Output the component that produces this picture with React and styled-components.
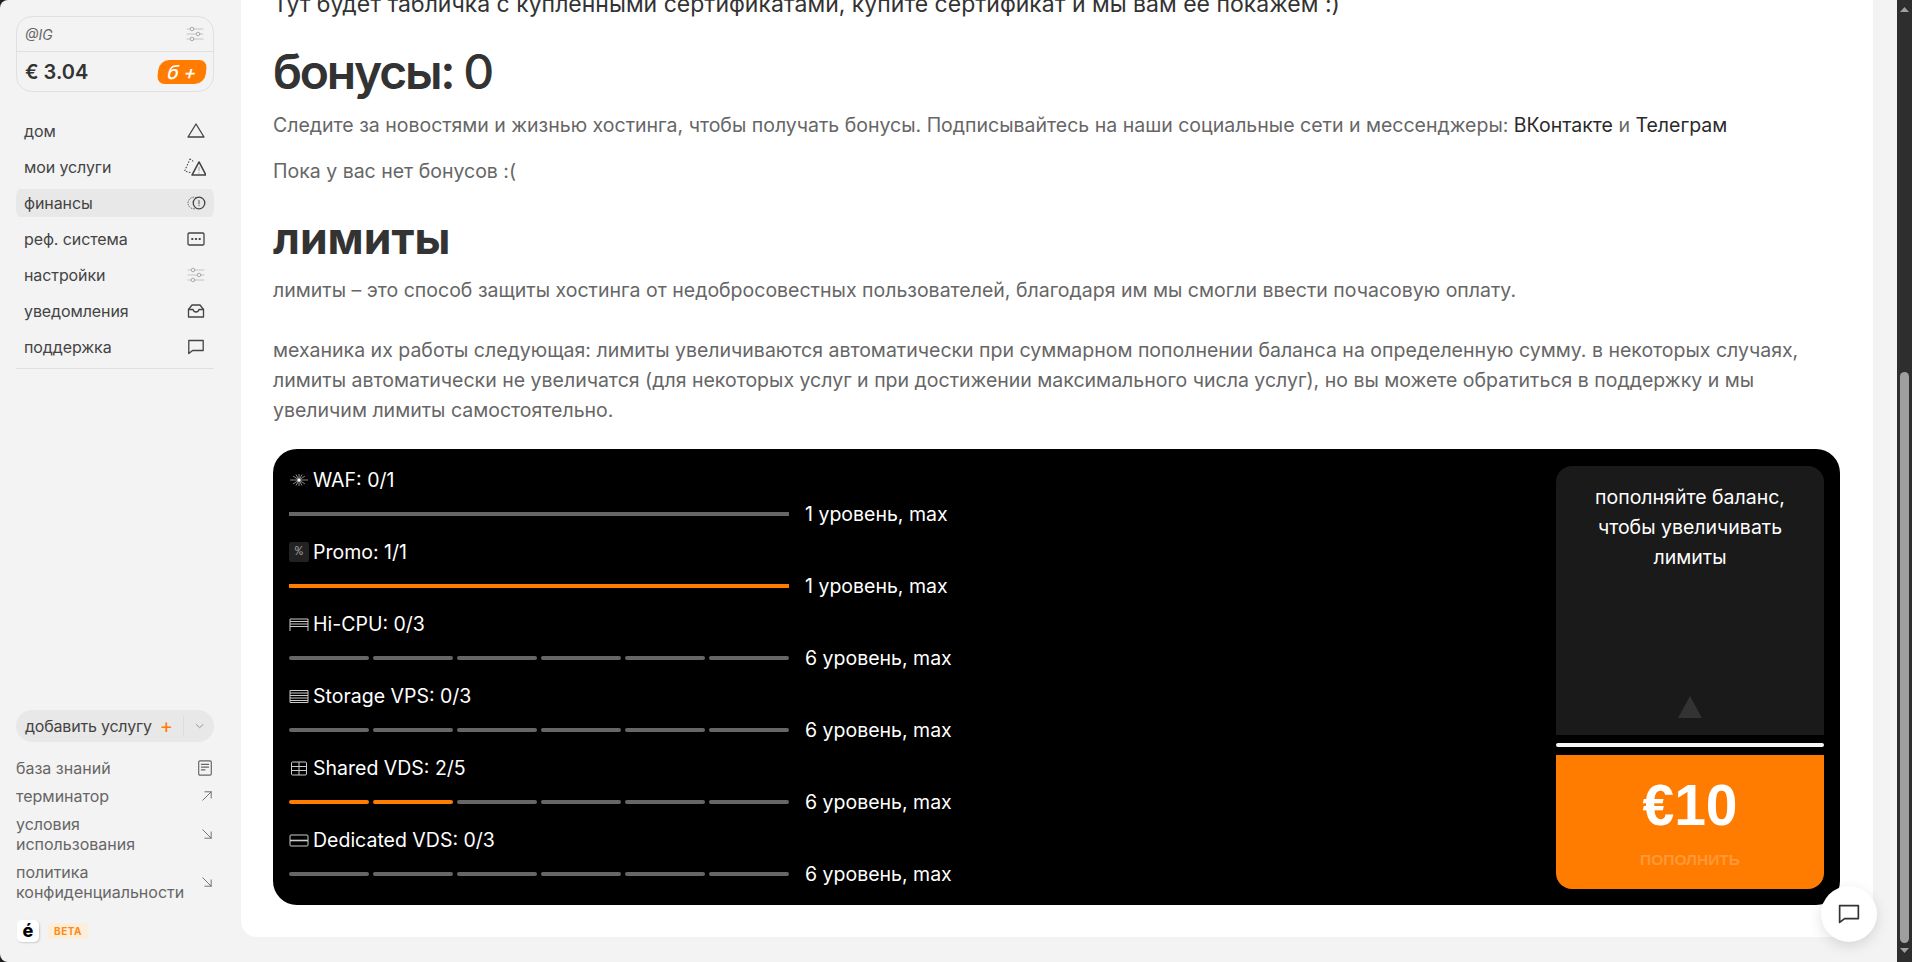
import React from 'react';
import { styled, createGlobalStyle } from 'styled-components';

const GlobalStyle = createGlobalStyle`
html, body { margin: 0; padding: 0; background: #1f1f1f; }
body { font-family: Inter, "Liberation Sans", sans-serif; overflow: hidden; }
* { box-sizing: border-box; }
`;

const Stroke = ({ children, size = 20, color = '#444', width = 1.3 }) => (
  <svg width={size} height={size} viewBox="0 0 20 20" fill="none" stroke={color} strokeWidth={width} strokeLinecap="round" strokeLinejoin="round">
    {children}
  </svg>
);

const TriangleIcon = () => <Stroke><path d="M10 3 18 16H2Z" /></Stroke>;
const ServicesIcon = () => (
  <Stroke size={24}>
    <path d="M6.7 3.3 2.2 13.3 8 15M6.7 3.3 9 5" strokeDasharray="0.6 1.9" strokeWidth="0.9" />
    <path d="M14.2 5.8 20 16.7H8.3Z" />
    <path d="M14.2 10v3M14.2 14.8v.2" strokeWidth="0.8" stroke="#999" />
  </Stroke>
);
const FinanceIcon = () => (
  <Stroke size={20}>
    <path d="M10 4.6A5.8 5.8 0 1 0 10 15.4" strokeDasharray="0.6 1.9" strokeWidth="0.9" />
    <circle cx="13" cy="10" r="5.8" />
    <path d="M13 7.5v3.5M13 12.6v.2" strokeWidth="0.9" />
  </Stroke>
);
const RefIcon = () => (
  <Stroke>
    <rect x="2" y="4" width="16" height="12" rx="1.2" />
    <path d="M6 10h.6M9.7 10h.6M13.4 10h.6" strokeWidth="1.8" />
  </Stroke>
);
const SlidersIcon = () => (
  <Stroke color="#aaa" width={1}>
    <path d="M2 5h16M2 10h16M2 15h16" stroke="#c4c4c4" />
    <circle cx="7" cy="5" r="1.8" fill="#f3f3f3" />
    <circle cx="13" cy="10" r="1.8" fill="#f3f3f3" />
    <circle cx="7" cy="15" r="1.8" fill="#f3f3f3" />
  </Stroke>
);
const InboxIcon = () => (
  <Stroke>
    <path d="M2.5 8.5 6 4h8l3.5 4.5V16h-15Z" />
    <path d="M2.5 8.5H7c.5 1.8 1.6 2.5 3 2.5s2.5-.7 3-2.5h4.5" />
  </Stroke>
);
const ChatIcon = ({ size = 20, color = '#444' }) => (
  <Stroke size={size} color={color}>
    <path d="M2.8 3.5h14.4v10H6.6l-3.8 3Z" />
  </Stroke>
);
const BookIcon = () => (
  <Stroke size={18} color="#666">
    <rect x="3" y="2" width="14" height="16" rx="1.5" />
    <path d="M6 6h8M6 9h8M6 12h4" />
  </Stroke>
);
const ArrowUpIcon = () => (
  <Stroke size={14} color="#666">
    <path d="M4 16 16 4M7 4h9v9" />
  </Stroke>
);
const ArrowDownIcon = () => (
  <Stroke size={14} color="#666">
    <path d="M4 4 16 16M16 7v9H7" />
  </Stroke>
);
const Chevron = () => (
  <Stroke size={14} color="#777">
    <path d="M4 7.5 10 13l6-5.5" />
  </Stroke>
);

const LimitStroke = ({ children }) => (
  <svg width="20" height="20" viewBox="0 0 20 20" fill="none" stroke="#ccc" strokeWidth="1">
    {children}
  </svg>
);
const WafIcon = () => (
  <LimitStroke>
    <path d="M1 10h18M10 4v12M4 6l12 8M16 6 4 14M7 4.5l6 11M13 4.5l-6 11" strokeWidth="0.8" stroke="#aaa" />
    <circle cx="10" cy="10" r="1.6" fill="#fff" stroke="none" />
  </LimitStroke>
);
const HiCpuIcon = () => (
  <LimitStroke>
    <path d="M1 17V5h18v12M1 7.5h18M1 10h18M1 12.5h18" />
  </LimitStroke>
);
const StorageIcon = () => (
  <LimitStroke>
    <path d="M1 16.5V4.5h18v12ZM1 7h18M1 9.5h18M1 12h18M1 14.5h18" />
  </LimitStroke>
);
const SharedIcon = () => (
  <LimitStroke>
    <rect x="2.5" y="4" width="15" height="13" rx="1" />
    <path d="M2.5 8.5h15M2.5 12.5h15M10 4v13" />
  </LimitStroke>
);
const DedicatedIcon = () => (
  <LimitStroke>
    <rect x="1" y="5" width="18" height="11" rx="1" />
    <path d="M1 10.5h18" strokeWidth="1.6" />
  </LimitStroke>
);

export default function App() {
  const nav = [
    ['дом', <TriangleIcon />],
    ['мои услуги', <ServicesIcon />],
    ['финансы', <FinanceIcon />, true],
    ['реф. система', <RefIcon />],
    ['настройки', <SlidersIcon />],
    ['уведомления', <InboxIcon />],
    ['поддержка', <ChatIcon />],
  ];

  const limits = [
    { icon: <WafIcon />, name: 'WAF: 0/1', parts: 1, filled: 0, level: '1 уровень, max' },
    { icon: <PercentBox>%</PercentBox>, name: 'Promo: 1/1', parts: 1, filled: 1, level: '1 уровень, max' },
    { icon: <HiCpuIcon />, name: 'Hi-CPU: 0/3', parts: 6, filled: 0, level: '6 уровень, max' },
    { icon: <StorageIcon />, name: 'Storage VPS: 0/3', parts: 6, filled: 0, level: '6 уровень, max' },
    { icon: <SharedIcon />, name: 'Shared VDS: 2/5', parts: 6, filled: 2, level: '6 уровень, max' },
    { icon: <DedicatedIcon />, name: 'Dedicated VDS: 0/3', parts: 6, filled: 0, level: '6 уровень, max' },
  ];

  return (
    <Page>
      <GlobalStyle />
      <Sidebar>
        <Account>
          <AccountTop>
            <span>@IG</span>
            <SlidersIcon />
          </AccountTop>
          <AccountBottom>
            <strong>€ 3.04</strong>
            <TopUp>б +</TopUp>
          </AccountBottom>
        </Account>
        <Nav>
          {nav.map(([label, icon, active]) => (
            <NavItem key={label} $active={active}>
              <span>{label}</span>
              <IconSlot>{icon}</IconSlot>
            </NavItem>
          ))}
        </Nav>
        <Bottom>
          <AddService>
            <span>добавить услугу</span>
            <Plus>+</Plus>
            <Sep />
            <Chevron />
          </AddService>
          <Links>
            <LinkRow><span>база знаний</span><BookIcon /></LinkRow>
            <LinkRow><span>терминатор</span><ArrowUpIcon /></LinkRow>
            <LinkRow><span>условия<br />использования</span><ArrowDownIcon /></LinkRow>
            <LinkRow><span>политика<br />конфиденциальности</span><ArrowDownIcon /></LinkRow>
          </Links>
          <Brand>
            <Logo>é</Logo>
            <Beta>BETA</Beta>
          </Brand>
        </Bottom>
      </Sidebar>
      <MainScroll>
        <Panel>
          <Lead>Тут будет табличка с купленными сертификатами, купите сертификат и мы вам ее покажем :)</Lead>
          <H1>бонусы: <Count>0</Count></H1>
          <Text>
            Следите за новостями и жизнью хостинга, чтобы получать бонусы. Подписывайтесь на наши социальные сети и мессенджеры: <A>ВКонтакте</A> и <A>Телеграм</A>
          </Text>
          <Text>Пока у вас нет бонусов :(</Text>
          <H2>лимиты</H2>
          <LimitsText>
            лимиты – это способ защиты хостинга от недобросовестных пользователей, благодаря им мы смогли ввести почасовую оплату.
            <br /><br />
            механика их работы следующая: лимиты увеличиваются автоматически при суммарном пополнении баланса на определенную сумму. в некоторых случаях, лимиты автоматически не увеличатся (для некоторых услуг и при достижении максимального числа услуг), но вы можете обратиться в поддержку и мы увеличим лимиты самостоятельно.
          </LimitsText>
          <LimitsCard>
            <LimitList>
              {limits.map((l) => (
                <Limit key={l.name}>
                  <LimitName>{l.icon}<span>{l.name}</span></LimitName>
                  <LimitLine>
                    <Bar>
                      {Array.from({ length: l.parts }).map((_, i) => (
                        <Segment key={i} $on={i < l.filled} $solid={l.parts === 1} />
                      ))}
                    </Bar>
                    <span>{l.level}</span>
                  </LimitLine>
                </Limit>
              ))}
            </LimitList>
            <Side>
              <Hint>
                <span>пополняйте баланс, чтобы увеличивать лимиты</span>
                <HintArrow />
              </Hint>
              <WhiteLine />
              <Offer>
                <Amount>€10</Amount>
                <OfferLabel>пополнить</OfferLabel>
              </Offer>
            </Side>
          </LimitsCard>
        </Panel>
        <ChatButton><ChatIcon size={26} color="#333" /></ChatButton>
      </MainScroll>
      <ScrollBar>
        <ScrollArrow $up />
        <Thumb />
        <ScrollArrow />
      </ScrollBar>
    </Page>
  );
}

const Page = styled.div`
display: flex;
height: 962px;
width: 1912px;
overflow: hidden;
background: #1f1f1f;
`;

const Sidebar = styled.aside`
width: 241px;
flex-shrink: 0;
background: #f3f3f3;
border-radius: 8px 0 0 8px;
padding: 16px 27px 20px 16px;
display: flex;
flex-direction: column;
color: #444;
`;

const Account = styled.div`
border: 1px solid #e0e0e0;
border-radius: 16px;
height: 76px;
`;

const AccountTop = styled.div`
height: 35px;
padding: 0 8px 0 8px;
display: flex;
align-items: center;
justify-content: space-between;
border-bottom: 1px solid #e0e0e0;
font-size: 14px;
font-style: italic;
color: #666;
`;

const AccountBottom = styled.div`
height: 39px;
padding: 0 7px 0 8px;
display: flex;
align-items: center;
justify-content: space-between;
strong { font-size: 20px; font-weight: 600; color: #333; }
`;

const TopUp = styled.span`
width: 48px;
height: 24px;
border-radius: 10px 8px 10px 8px;
transform: skewX(-6deg);
background: #ff7c00;
color: #fff;
font-size: 19px;
font-style: italic;
font-weight: 500;
display: flex;
align-items: center;
justify-content: center;
`;

const Nav = styled.nav`
margin-top: 21px;
padding-bottom: 3px;
border-bottom: 1px solid #e0e0e0;
display: flex;
flex-direction: column;
`;

const NavItem = styled.div`
height: 36px;
padding: 4px 8px;
display: flex;
align-items: center;
justify-content: space-between;
font-size: 16px;
letter-spacing: -0.1px;
color: #444;
background: ${({ $active }) => ($active ? 'linear-gradient(#e8e8e8, #e8e8e8) center / 100% 28px no-repeat' : 'none')};
border-radius: 12px;
`;

const IconSlot = styled.span`
width: 20px;
height: 24px;
display: flex;
align-items: center;
justify-content: flex-end;
svg:only-child { flex-shrink: 0; }
`;

const Bottom = styled.div`
margin-top: auto;
`;

const AddService = styled.div`
height: 32px;
border-radius: 16px;
background: #e8e8e8;
padding: 0 9px;
display: flex;
align-items: center;
font-size: 16px;
letter-spacing: -0.2px;
white-space: nowrap;
color: #444;
`;

const Plus = styled.span`
color: #ff7c00;
font-size: 20px;
margin-left: 8px;
`;

const Sep = styled.span`
width: 1px;
height: 20px;
background: #ddd;
margin: 0 10px;
flex-shrink: 0;
`;

const Links = styled.div`
margin-top: 16px;
display: flex;
flex-direction: column;
gap: 8px;
`;

const LinkRow = styled.div`
display: flex;
align-items: center;
justify-content: space-between;
font-size: 16px;
line-height: 20px;
color: #666;
svg { flex-shrink: 0; }
`;

const Brand = styled.div`
margin-top: 18px;
display: flex;
align-items: center;
gap: 9px;
padding-left: 1px;
`;

const Logo = styled.div`
width: 22px;
height: 22px;
border-radius: 5px;
background: #fff;
box-shadow: 1px 1px 2px #ccc;
color: #000;
font-weight: 800;
font-size: 18px;
line-height: 22px;
text-align: center;
`;

const Beta = styled.div`
width: 40px;
height: 16px;
border-radius: 3px;
background: #fbeeda;
color: #ff8a14;
font-size: 10px;
font-weight: 700;
letter-spacing: 0.5px;
line-height: 16px;
text-align: center;
`;

const MainScroll = styled.main`
flex: 1;
position: relative;
background: #f3f3f3;
padding-bottom: 25px;
padding-right: 24px;
display: flex;
flex-direction: column;
justify-content: flex-end;
overflow: hidden;
`;

const Panel = styled.div`
background: #fff;
border-radius: 0 0 16px 16px;
padding: 0 33px 32px 32px;
`;

const Lead = styled.p`
margin: 0 0 24px;
font-size: 23px;
line-height: 30px;
color: #333;
`;

const H1 = styled.h1`
margin: 0 0 9px;
font-size: 48px;
line-height: 58px;
font-weight: 600;
letter-spacing: -2.2px;
color: #333;
`;

const Count = styled.span`
font-weight: 500;
`;

const Text = styled.p`
margin: 0 0 16px;
font-size: 19.5px;
line-height: 30px;
color: #666;
`;

const LimitsText = styled(Text)`
margin-bottom: 24px;
`;

const A = styled.a`
color: #2a2a2a;
`;

const H2 = styled.h2`
margin: 25px 0 10px;
font-size: 44.5px;
line-height: 54px;
font-weight: 700;
color: #333;
`;

const LimitsCard = styled.div`
background: #000;
border-radius: 24px;
height: 456px;
padding: 18px 16px 16px;
display: flex;
justify-content: space-between;
color: #fff;
`;

const LimitList = styled.div`
display: flex;
flex-direction: column;
gap: 13px;
`;

const Limit = styled.div`
height: 59px;
`;

const LimitName = styled.div`
height: 26px;
display: flex;
align-items: center;
gap: 4px;
font-size: 19.5px;
`;

const PercentBox = styled.span`
width: 20px;
height: 20px;
border-radius: 2px;
background: #222;
color: #999;
font-family: "Liberation Mono", monospace;
font-size: 13px;
line-height: 20px;
text-align: center;
`;

const LimitLine = styled.div`
display: flex;
align-items: center;
gap: 16px;
margin-top: 9px;
font-size: 19.5px;
line-height: 24px;
`;

const Bar = styled.div`
width: 500px;
display: flex;
gap: 4px;
`;

const Segment = styled.div`
flex: 1;
height: 4px;
border-radius: ${({ $solid }) => ($solid ? '0' : '2px')};
background: ${({ $on }) => ($on ? '#ff7c00' : '#666')};
`;

const Side = styled.div`
width: 268px;
margin-top: -1px;
display: flex;
flex-direction: column;
`;

const Hint = styled.div`
height: 269px;
background: #1a1a1a;
border-radius: 16px 16px 0 0;
padding: 16px 24px 17px;
display: flex;
flex-direction: column;
justify-content: space-between;
align-items: center;
text-align: center;
font-size: 19.5px;
line-height: 30px;
`;

const HintArrow = styled.div`
width: 24px;
height: 22px;
background: #333;
clip-path: polygon(50% 0, 100% 100%, 0 100%);
`;

const WhiteLine = styled.div`
height: 4px;
margin: 8px 0;
background: #f5f5f5;
border-radius: 2px;
`;

const Offer = styled.div`
flex: 1;
background: #ff7c00;
border-radius: 0 0 16px 16px;
display: flex;
flex-direction: column;
align-items: center;
padding-top: 16px;
font-family: "Liberation Sans", Arial, sans-serif;
font-weight: 700;
`;

const Amount = styled.div`
font-size: 57px;
line-height: 68px;
`;

const OfferLabel = styled.div`
margin-top: 12px;
font-size: 15.5px;
text-transform: uppercase;
color: #ff9838;
`;

const ChatButton = styled.div`
position: absolute;
right: 20px;
bottom: 20px;
width: 56px;
height: 56px;
border-radius: 50%;
background: #fff;
box-shadow: 0 4px 14px rgba(0, 0, 0, 0.12);
display: flex;
align-items: center;
justify-content: center;
`;

const ScrollBar = styled.div`
width: 15px;
flex-shrink: 0;
background: #2e2e2e;
padding: 7px 3px 0;
display: flex;
flex-direction: column;
`;

const Thumb = styled.div`
height: 571px;
margin-top: 360px;
background: #9f9f9f;
border-radius: 5px;
`;

const ScrollArrow = styled.div`
margin-top: ${({ $up }) => ($up ? '0' : '5px')};
height: 5px;
background: #9f9f9f;
clip-path: ${({ $up }) => ($up ? 'polygon(50% 0, 100% 100%, 0 100%)' : 'polygon(0 0, 100% 0, 50% 100%)')};
`;
